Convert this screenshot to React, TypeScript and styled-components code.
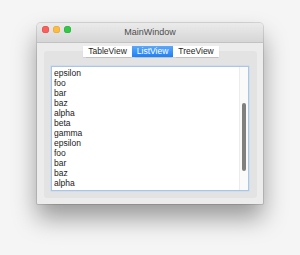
import * as React from 'react';
import styled, { createGlobalStyle } from 'styled-components';

const GlobalStyle = createGlobalStyle`
  html, body {
    margin: 0;
    padding: 0;
    background: #f5f5f5;
    font-family: "Liberation Sans", Arial, sans-serif;
  }
`;

const items = ['epsilon', 'foo', 'bar', 'baz', 'alpha', 'beta', 'gamma', 'epsilon', 'foo', 'bar', 'baz', 'alpha'];
const tabs = ['TableView', 'ListView', 'TreeView'];

export default function App() {
  return (
    <>
      <GlobalStyle />
      <Page>
        <Window>
          <TitleBar>
            <Lights>
              <Light color="#fc605c" border="#de4a46" />
              <Light color="#fdbc40" border="#dea236" />
              <Light color="#34c84a" border="#27aa35" />
            </Lights>
            <Title>MainWindow</Title>
          </TitleBar>
          <Body>
            <TabBar>
              {tabs.map((t) => (
                <Tab key={t} active={t === 'ListView'}>{t}</Tab>
              ))}
            </TabBar>
            <Pane>
              <ListBox>
                <Rows>
                  {items.map((it, i) => (
                    <Row key={i}>{it}</Row>
                  ))}
                </Rows>
                <ScrollTrack>
                  <Thumb />
                </ScrollTrack>
              </ListBox>
            </Pane>
          </Body>
        </Window>
      </Page>
    </>
  );
}

const Page = styled.div`
  width: 300px;
  height: 255px;
  padding: 23px 0 0 37px;
  box-sizing: border-box;
`;

const Window = styled.div`
  width: 226px;
  height: 181px;
  background: #ececec;
  border-radius: 4px 4px 1px 1px;
  box-shadow: 0 14px 24px rgba(0, 0, 0, 0.38), 0 0 0 1px rgba(0, 0, 0, 0.12);
  display: flex;
  flex-direction: column;
  overflow: hidden;
`;

const TitleBar = styled.div`
  height: 20px;
  box-sizing: border-box;
  background: linear-gradient(#ebebeb, #d6d6d6);
  border-bottom: 1px solid #c2c2c2;
  position: relative;
  display: flex;
  align-items: center;
  justify-content: center;
`;

const Lights = styled.div`
  position: absolute;
  left: 5px;
  top: 3px;
  display: flex;
  gap: 4px;
`;

const Light = styled.div<{ color: string; border: string }>`
  width: 7px;
  height: 7px;
  border-radius: 50%;
  background: ${(p) => p.color};
  box-shadow: inset 0 0 0 0.5px ${(p) => p.border};
`;

const Title = styled.div`
  font-size: 9px;
  color: #4d4d4d;
  margin-top: -2px;
`;

const Body = styled.div`
  flex: 1;
  padding: 3px 6px 6px 7px;
  display: flex;
  flex-direction: column;
`;

const TabBar = styled.div`
  display: flex;
  justify-content: center;
  position: relative;
  z-index: 1;
  height: 11px;
  margin-left: 1px;
`;

const Tab = styled.div<{ active?: boolean }>`
  height: 11px;
  line-height: 11px;
  font-size: 8.5px;
  padding: 0 5px;
  box-sizing: border-box;
  color: ${(p) => (p.active ? '#ffffff' : '#1e1e1e')};
  background: ${(p) => (p.active ? 'linear-gradient(#5aa8fb, #1d80f6)' : '#ffffff')};
  box-shadow: 0 0.5px 1px rgba(0, 0, 0, 0.15);
`;

const Pane = styled.div`
  flex: 1;
  margin-top: -6px;
  background: #e3e3e3;
  border-radius: 3px;
  padding: 15px 8px 7px 7px;
  display: flex;
`;

const ListBox = styled.div`
  flex: 1;
  background: #ffffff;
  border: 1px solid #a9c6e8;
  box-shadow: 0 0 0 0.5px #c4d8ef;
  display: flex;
  overflow: hidden;
`;

const Rows = styled.div`
  flex: 1;
  padding: 1px 0 0 2px;
`;

const Row = styled.div`
  height: 10px;
  line-height: 10px;
  font-size: 8.5px;
  color: #1a1a1a;
`;

const ScrollTrack = styled.div`
  width: 9px;
  border-left: 1px solid #ececec;
  background: #fafafa;
  padding-top: 36px;
  box-sizing: border-box;
  display: flex;
  justify-content: center;
`;

const Thumb = styled.div`
  width: 4px;
  height: 68px;
  border-radius: 2px;
  background: #808080;
`;
